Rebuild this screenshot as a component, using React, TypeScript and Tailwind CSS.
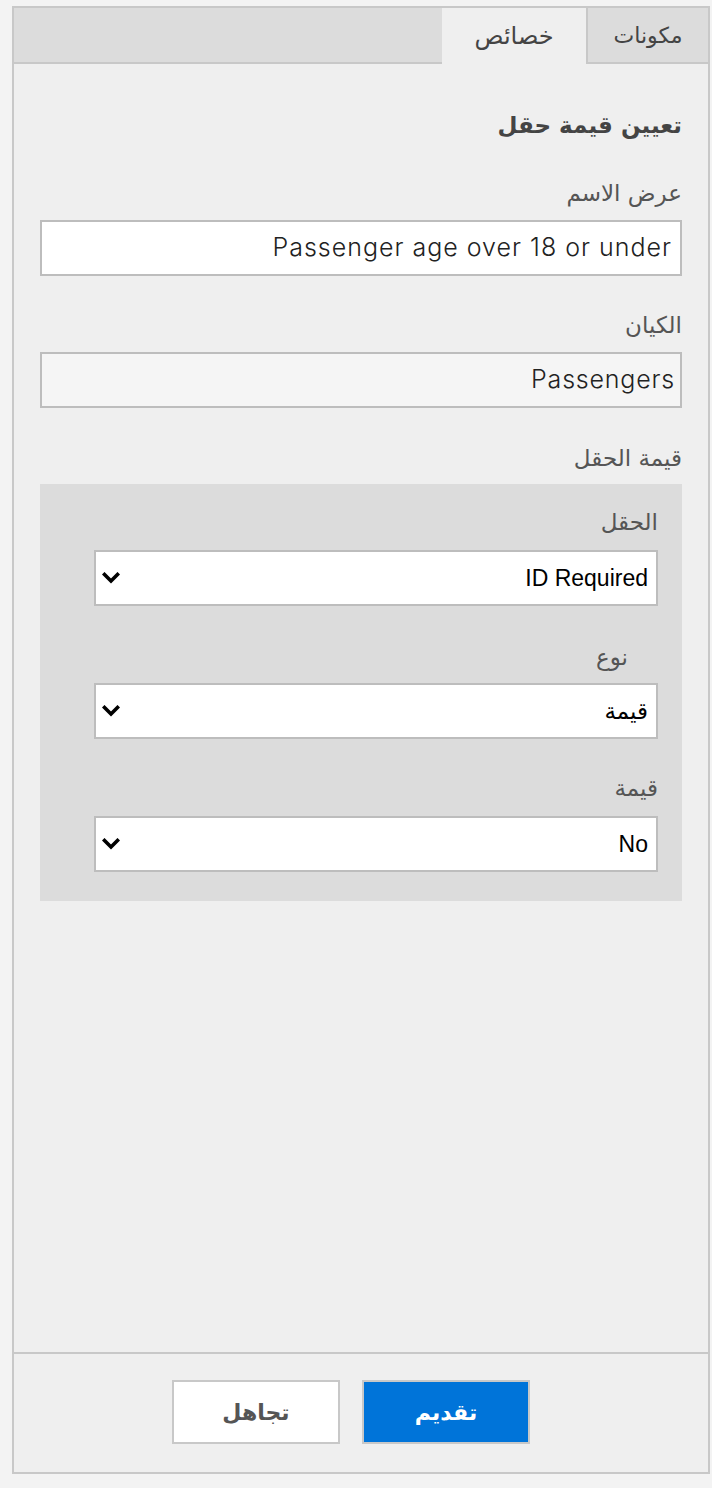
import React from 'react';

const Chevron: React.FC = () => (
  <svg width="18" height="12" viewBox="0 0 18 12" fill="none">
    <path d="M2.5 2.5L9 9L15.5 2.5" stroke="black" strokeWidth="3.6" strokeLinecap="square" />
  </svg>
);

const Label: React.FC<{ children: React.ReactNode; className?: string }> = ({ children, className = '' }) => (
  <div className={`h-[28px] leading-[28px] text-[23px] text-[#555] font-['DejaVu_Sans',sans-serif] ${className}`}>
    {children}
  </div>
);

const SelectBox: React.FC<{ value: string }> = ({ value }) => (
  <div className="h-[56px] bg-white border-2 border-[#bdbdbd] flex items-center justify-between pr-[8px] pl-[6px]">
    <span className="text-[23px] text-black font-['Liberation_Sans','DejaVu_Sans',sans-serif]">{value}</span>
    <Chevron />
  </div>
);

export default function App() {
  return (
    <div className="min-h-[1488px] bg-[#f3f3f3] pt-[6px] pl-[12px]">
      <div dir="rtl" className="w-[698px] h-[1468px] border-2 border-[#c8c8c8] bg-[#efefef] flex flex-col">
        {/* Tabs */}
        <div className="h-[56px] bg-[#dcdcdc] border-b-2 border-[#c8c8c8] flex shrink-0">
          <div className="w-[122px] h-[54px] border-l-2 border-[#c8c8c8] flex items-center justify-center text-[22px] text-[#444] font-['DejaVu_Sans',sans-serif]">
            مكونات
          </div>
          <div className="w-[144px] h-[56px] bg-[#efefef] flex items-center justify-center text-[24px] text-[#444] font-['DejaVu_Sans',sans-serif]">
            خصائص
          </div>
        </div>

        {/* Content */}
        <div className="flex-1 px-[26px] pt-[46px]">
          <h2 className="h-[30px] leading-[30px] text-[23px] font-bold text-[#444] font-['DejaVu_Sans',sans-serif]">
            تعيين قيمة حقل
          </h2>

          <Label className="mt-[39px] mb-[13px]">عرض الاسم</Label>
          <div className="h-[56px] bg-white border-2 border-[#bdbdbd] flex items-center pr-[8px]">
            <span dir="ltr" className="text-[25px] font-light tracking-[1px] text-[#222] font-['Inter','Liberation_Sans',sans-serif]">
              Passenger age over 18 or under
            </span>
          </div>

          <Label className="mt-[35px] mb-[13px]">الكيان</Label>
          <div className="h-[56px] bg-[#f5f5f5] border-2 border-[#bdbdbd] flex items-center pr-[5px]">
            <span dir="ltr" className="text-[25px] font-light tracking-[0.8px] text-[#222] font-['Inter','Liberation_Sans',sans-serif]">
              Passengers
            </span>
          </div>

          <Label className="mt-[36px] mb-[12px]">قيمة الحقل</Label>
          <div className="bg-[#dcdcdc] pt-[24px] pb-[29px] pr-[24px] pl-[54px]">
            <Label className="mb-[14px]">الحقل</Label>
            <SelectBox value="ID Required" />

            <Label className="mt-[37px] mb-[12px] pr-[30px]">نوع</Label>
            <SelectBox value="قيمة" />

            <Label className="mt-[35px] mb-[14px]">قيمة</Label>
            <SelectBox value="No" />
          </div>
        </div>

        {/* Footer */}
        <div className="h-[120px] shrink-0 border-t-2 border-[#c8c8c8] flex items-center justify-center gap-[22px] pr-[20px] pb-[2px]">
          <button className="w-[168px] h-[64px] bg-[#0074d9] border-2 border-[#c8c8c8] text-white text-[22px] font-bold font-['DejaVu_Sans',sans-serif]">
            تقديم
          </button>
          <button className="w-[168px] h-[64px] bg-white border-2 border-[#c8c8c8] text-[#555] text-[22px] font-bold font-['DejaVu_Sans',sans-serif]">
            تجاهل
          </button>
        </div>
      </div>
    </div>
  );
}
